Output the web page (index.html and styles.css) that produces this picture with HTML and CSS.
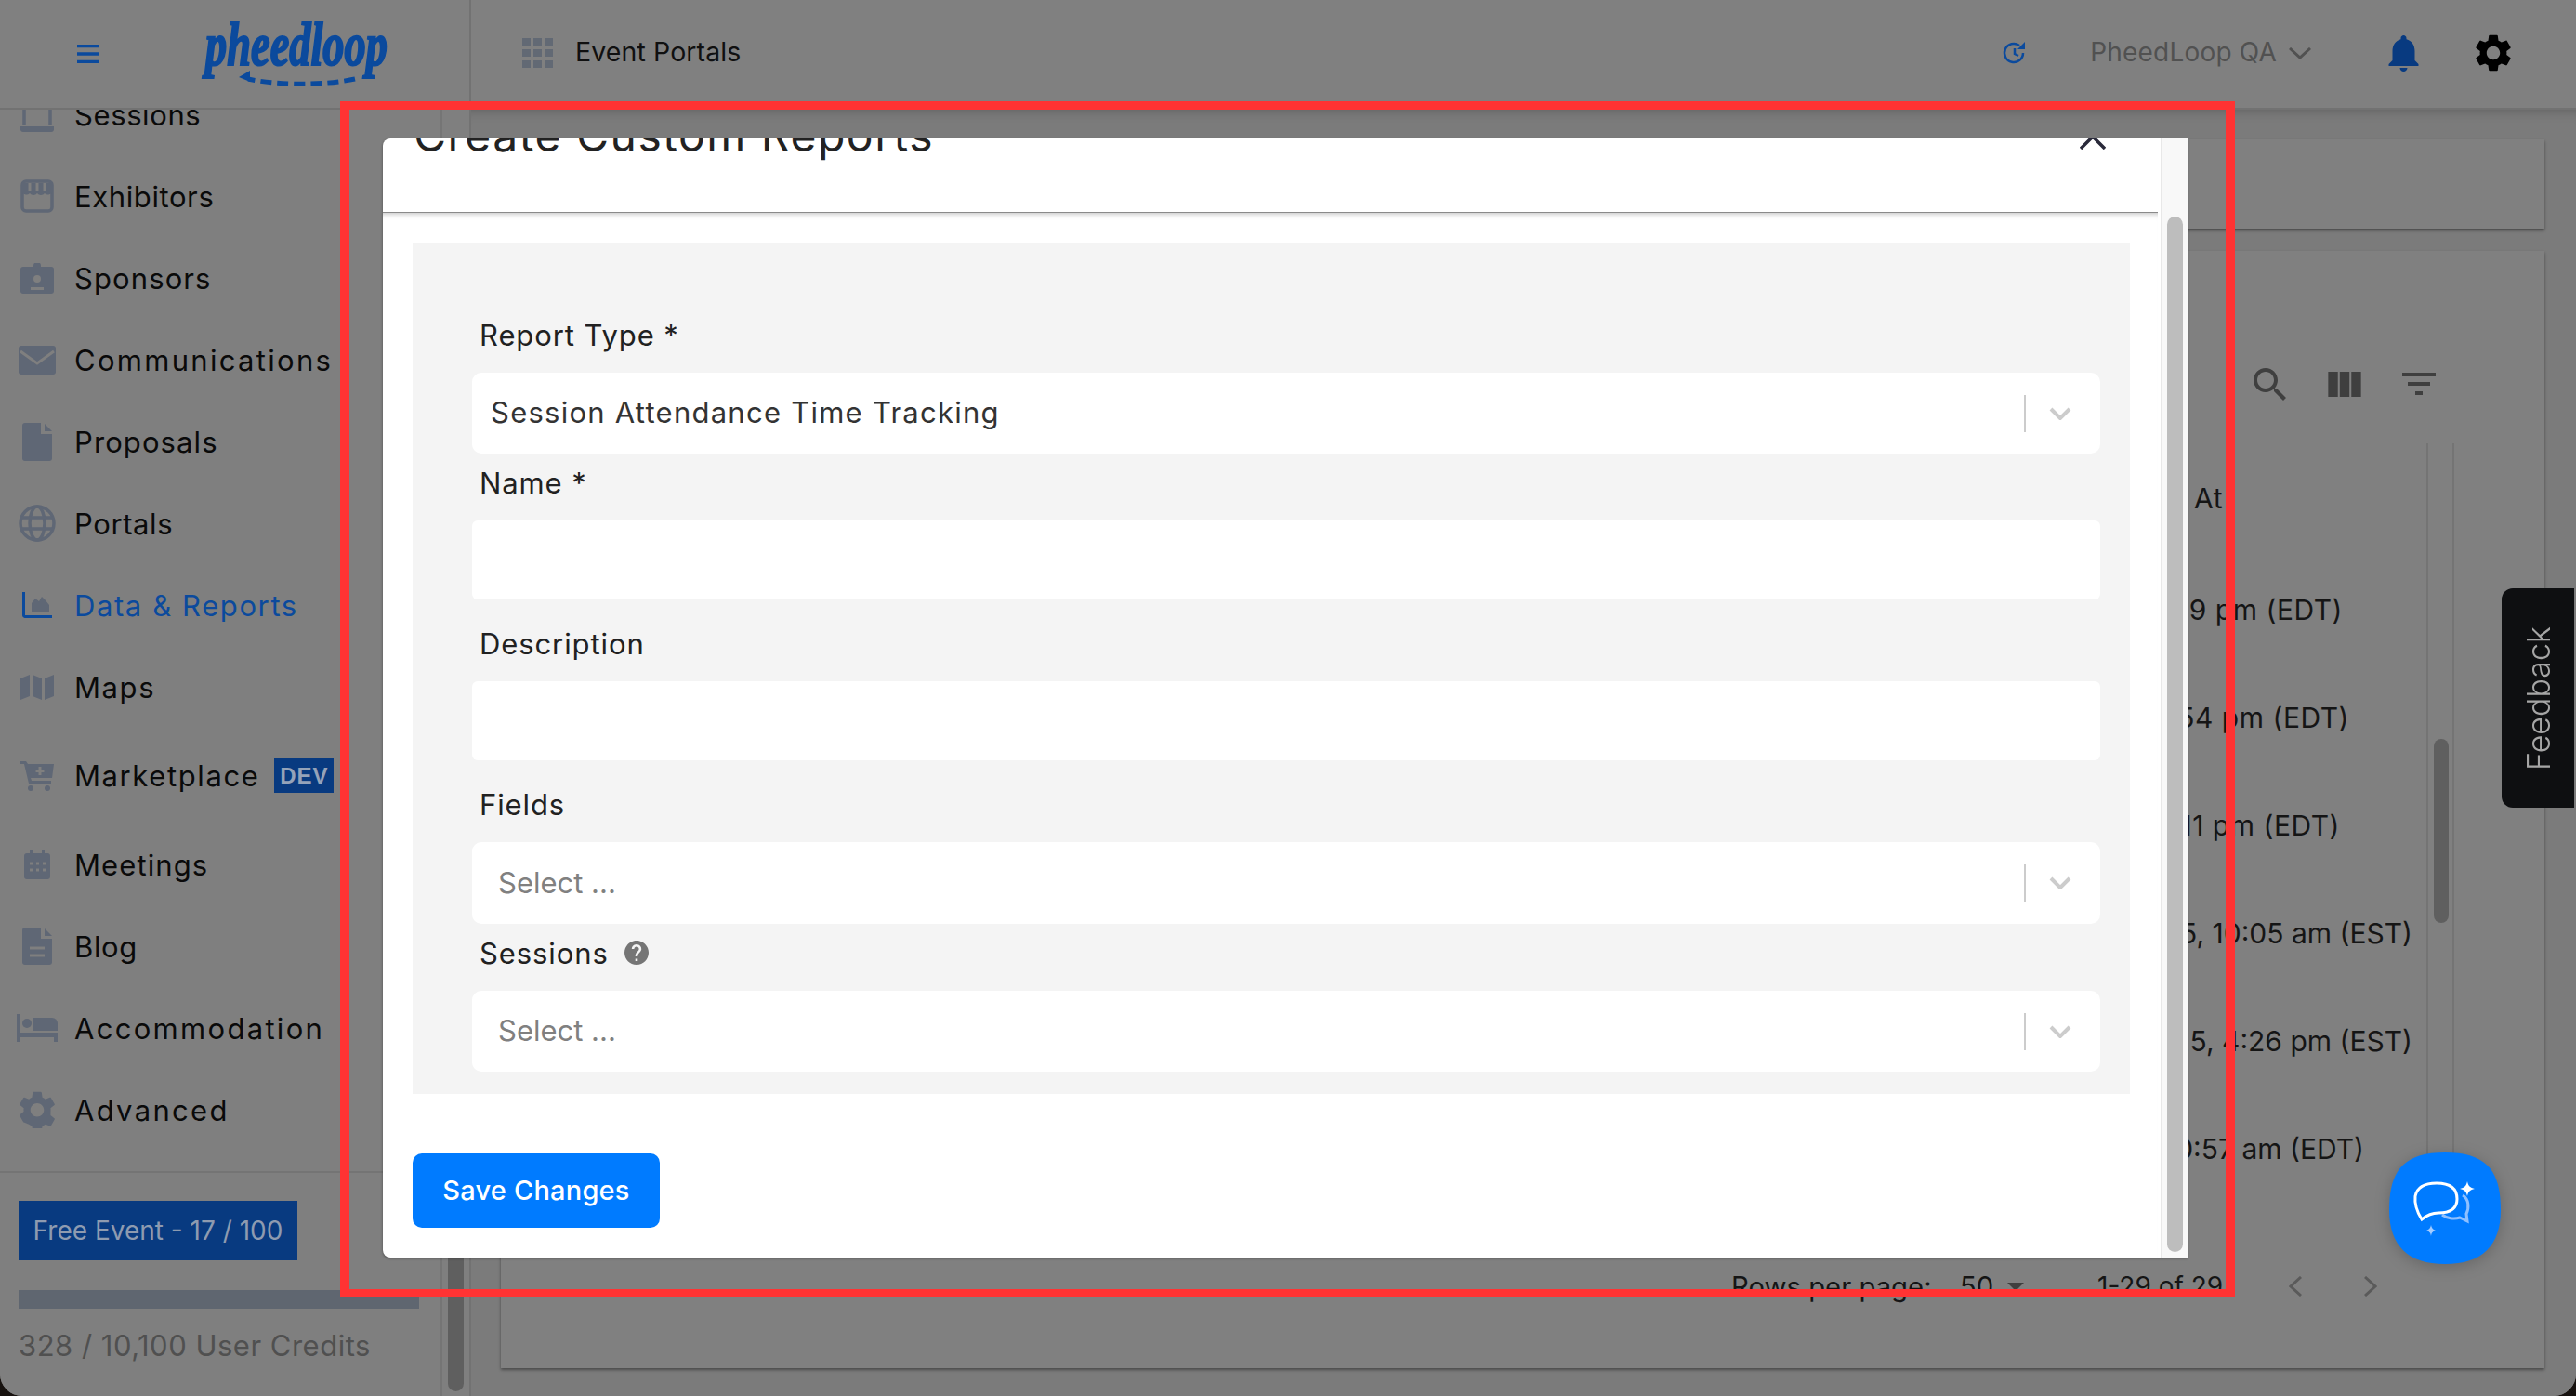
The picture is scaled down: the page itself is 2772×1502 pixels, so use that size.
FILE: index.html
```html
<!DOCTYPE html>
<html lang="en">
<head>
<meta charset="utf-8">
<title>Create Custom Reports</title>
<link rel="stylesheet" href="styles.css">
</head>
<body>
<div class="app">
  <header class="topbar">
    <div class="brand">
      <svg class="burger" viewBox="0 0 24 20"><path d="M0 1.500h24M0 10h24M0 18.500h24"/></svg>
      <svg class="logo" viewBox="0 0 200 70">
        <text x="2" y="46" textLength="196" lengthAdjust="spacingAndGlyphs">pheedloop</text>
        <path class="logo-dash" d="M163 61C130 68 80 68 48 61"/>
        <path class="logo-head" d="M38 59l12-7v12z"/>
      </svg>
    </div>
    <div class="crumb">
      <svg class="apps" viewBox="0 0 33 32"><path d="M0 0h9v8H0zM12 0h9v8h-9zM24 0h9v8h-9zM0 12h9v8H0zM12 12h9v8h-9zM24 12h9v8h-9zM0 24h9v8H0zM12 24h9v8h-9zM24 24h9v8h-9z"/></svg>
      <span class="crumb-text">Event Portals</span>
    </div>
    <div class="top-actions">
      <svg class="refresh" viewBox="0 0 25 24"><path d="M21 12a10 10 0 1 1-4-8" /><path d="M12 7v6l4 2" /><path class="refresh-head" d="M23 0v8h-8z"/></svg>
      <span class="org">PheedLoop QA</span>
      <svg class="org-chev" viewBox="0 0 24 12"><path d="M1 1l11 10L23 1"/></svg>
      <svg class="bell" viewBox="4 2.500 16 19.500"><path d="M12 22c1.100 0 2-.9 2-2h-4c0 1.100.89 2 2 2zm6-6v-5c0-3.070-1.640-5.640-4.500-6.320V4c0-.83-.67-1.500-1.500-1.500s-1.500.67-1.500 1.500v.68C7.630 5.360 6 7.920 6 11v5l-2 2v1h16v-1l-2-2z"/></svg>
      <svg class="gear-top" viewBox="2.600 2 18.800 20"><path d="M19.140 12.940c.04-.3.06-.61.06-.94 0-.32-.02-.64-.07-.94l2.030-1.580c.18-.14.23-.41.12-.61l-1.920-3.320c-.12-.22-.37-.29-.59-.22l-2.390.96c-.5-.38-1.030-.7-1.620-.94l-.36-2.540c-.04-.24-.24-.41-.48-.41h-3.840c-.24 0-.43.17-.47.41l-.36 2.540c-.59.24-1.130.57-1.620.94l-2.390-.96c-.22-.08-.47 0-.59.22L2.740 8.870c-.12.21-.08.47.12.61l2.030 1.580c-.05.3-.09.63-.09.94s.02.64.07.94l-2.030 1.580c-.18.14-.23.41-.12.61l1.920 3.320c.12.22.37.29.59.22l2.390-.96c.5.38 1.030.7 1.620.94l.36 2.540c.05.24.24.41.48.41h3.840c.24 0 .44-.17.47-.41l.36-2.540c.59-.24 1.130-.56 1.620-.94l2.390.96c.22.08.47 0 .59-.22l1.920-3.320c.12-.22.07-.47-.12-.61l-2.010-1.580zM12 15.600c-1.980 0-3.600-1.620-3.600-3.600s1.620-3.600 3.600-3.600 3.600 1.620 3.600 3.600-1.620 3.600-3.600 3.600z"/></svg>
    </div>
  </header>

  <div class="workspace">
    <aside class="sidebar">
      <div class="side-main">
        <nav class="nav">
          <a class="nav-row"><span class="nav-icon"><svg class="ic-w36" viewBox="0 0 36 40"><path class="ic-line" d="M4 2v30M32 2v30"/><path d="M0 33h36v3a3 3 0 0 1-3 3H3a3 3 0 0 1-3-3z"/></svg></span>Sessions</a>
          <a class="nav-row"><span class="nav-icon"><svg class="ic-w36" viewBox="0 0 36 36"><rect class="ic-line" x="2" y="2" width="32" height="32" rx="4"/><path d="M2 14a5 5 0 0 0 8 1 5 5 0 0 0 8 0 5 5 0 0 0 8 0 5 5 0 0 0 8-1V4H2z"/><path class="ic-cut" d="M10 4v9M18 4v9M26 4v9"/></svg></span>Exhibitors</a>
          <a class="nav-row track-s"><span class="nav-icon"><svg class="ic-w36" viewBox="0 0 36 33"><path d="M3 4h11V3a4 4 0 0 1 8 0v1h11a3 3 0 0 1 3 3v23a3 3 0 0 1-3 3H3a3 3 0 0 1-3-3V7a3 3 0 0 1 3-3z"/><circle class="ic-knock" cx="18" cy="17" r="4"/><path class="ic-knock" d="M11 26h14v3H11z"/></svg></span>Sponsors</a>
          <a class="nav-row track-l"><span class="nav-icon"><svg class="ic-w40" viewBox="0 0 40 31"><rect width="40" height="31" rx="3"/><path class="ic-cut" d="M2 6l18 13L38 6"/></svg></span>Communications</a>
          <a class="nav-row track-s"><span class="nav-icon"><svg class="ic-w32" viewBox="0 0 32 41"><path d="M3 0h17v12h12v26a3 3 0 0 1-3 3H3a3 3 0 0 1-3-3V3a3 3 0 0 1 3-3zM24 1l8 8h-8z"/></svg></span>Proposals</a>
          <a class="nav-row"><span class="nav-icon"><svg class="ic-w40" viewBox="0 0 40 40"><g class="ic-line"><circle cx="20" cy="20" r="18"/><ellipse cx="20" cy="20" rx="8" ry="18"/><path d="M3 14h34M3 26h34"/></g></svg></span>Portals</a>
          <a class="nav-row nav-active track-m"><span class="nav-icon"><svg class="ic-w32" viewBox="0 0 32 28"><path class="ic-axis" d="M1.500 0v25a1.500 1.500 0 0 0 1.500 1.500h29"/><path d="M10 21v-9l4-5 4 3 3-5 4 4 4 5v7z"/></svg></span>Data &amp; Reports</a>
          <a class="nav-row track-m"><span class="nav-icon"><svg class="ic-w36" viewBox="0 0 36 28"><path d="M0 5l10-4v23L0 28zM13 1l10 4v23l-10-4zM26 5l10-4v23l-10 4z"/></svg></span>Maps</a>
          <a class="nav-row nav-row-tall track-m"><span class="nav-icon"><svg class="ic-w36" viewBox="0 0 36 32"><path d="M0 0h6l2 3h28l-2 15H11l1 3h21v3H9L4 3H0z"/><circle cx="11" cy="29" r="3"/><circle cx="29" cy="29" r="3"/><path class="ic-cut" d="M21 6v9M16.500 10.500h9"/></svg></span>Marketplace<span class="dev">DEV</span></a>
          <a class="nav-row track-s"><span class="nav-icon"><svg class="ic-w28" viewBox="0 0 28 31"><path d="M6 0h3v3h10V0h3v3h3a3 3 0 0 1 3 3v22a3 3 0 0 1-3 3H3a3 3 0 0 1-3-3V6a3 3 0 0 1 3-3h3z"/><path class="ic-dots" d="M6 14h3M13 14h3M20 14h3M6 21h3M13 21h3M20 21h3"/></svg></span>Meetings</a>
          <a class="nav-row"><span class="nav-icon"><svg class="ic-w32" viewBox="0 0 32 40"><path d="M3 0h17v12h12v25a3 3 0 0 1-3 3H3a3 3 0 0 1-3-3V3a3 3 0 0 1 3-3zM24 1l8 8h-8z"/><path class="ic-cut" d="M8 22h16M8 30h16"/></svg></span>Blog</a>
          <a class="nav-row track-l"><span class="nav-icon"><svg class="ic-w44" viewBox="0 0 44 30"><path d="M0 0h4v20h40v10h-4v-5H4v5H0z"/><circle cx="11" cy="10" r="5"/><path d="M18 4h20a6 6 0 0 1 6 6v8H18z"/></svg></span>Accommodation</a>
          <a class="nav-row track-l"><span class="nav-icon"><svg class="ic-w38" viewBox="2.600 2 18.800 20"><path d="M19.140 12.940c.04-.3.06-.61.06-.94 0-.32-.02-.64-.07-.94l2.030-1.580c.18-.14.23-.41.12-.61l-1.920-3.320c-.12-.22-.37-.29-.59-.22l-2.390.96c-.5-.38-1.030-.7-1.620-.94l-.36-2.540c-.04-.24-.24-.41-.48-.41h-3.840c-.24 0-.43.17-.47.41l-.36 2.540c-.59.24-1.130.57-1.620.94l-2.390-.96c-.22-.08-.47 0-.59.22L2.740 8.870c-.12.21-.08.47.12.61l2.030 1.580c-.05.3-.09.63-.09.94s.02.64.07.94l-2.030 1.580c-.18.14-.23.41-.12.61l1.920 3.320c.12.22.37.29.59.22l2.390.96c.5.38 1.030.7 1.620.94l.36 2.540c.05.24.24.41.48.41h3.840c.24 0 .44-.17.47-.41l.36-2.540c.59-.24 1.130-.56 1.620-.94l2.390.96c.22.08.47 0 .59-.22l1.920-3.320c.12-.22.07-.47-.12-.61l-2.010-1.580zM12 15.600c-1.980 0-3.600-1.620-3.600-3.600s1.620-3.600 3.600-3.600 3.600 1.620 3.600 3.600-1.620 3.600-3.600 3.600z"/></svg></span>Advanced</a>
        </nav>
        <div class="plan">
          <div class="plan-badge">Free Event - 17 / 100</div>
          <div class="plan-bar"></div>
          <div class="plan-credits">328 / 10,100 User Credits</div>
        </div>
      </div>
      <div class="side-scroll"><div class="side-thumb"></div></div>
    </aside>

    <main class="main">
      <section class="card card-top"></section>
      <section class="card card-table">
        <div class="toolbar">
          <svg class="tool-search" viewBox="3 3 17.500 17.500"><path d="M15.500 14h-.79l-.28-.27C15.410 12.590 16 11.110 16 9.500 16 5.910 13.090 3 9.500 3S3 5.910 3 9.500 5.910 16 9.500 16c1.610 0 3.090-.59 4.230-1.570l.27.28v.79l5 4.990L20.490 19l-4.990-5zm-6 0C7.010 14 5 11.990 5 9.500S7.010 5 9.500 5 14 7.010 14 9.500 11.990 14 9.500 14z"/></svg>
          <svg class="tool-cols" viewBox="4 5 17 13"><path d="M10 18h5V5h-5v13zm-6 0h5V5H4v13zM16 5v13h5V5h-5z"/></svg>
          <svg class="tool-filter" viewBox="3 6 18 12"><path d="M10 18h4v-2h-4v2zM3 6v2h18V6H3zm3 7h12v-2H6v2z"/></svg>
        </div>
        <div class="table-wrap">
          <div class="table-rows">
            <div class="t-head"><span>Created At</span></div>
            <div class="t-row"><span>Jul 25, 2:39 pm (EDT)</span></div>
            <div class="t-row"><span>Jul 23, 3:54 pm (EDT)</span></div>
            <div class="t-row"><span>Jul 22, 2:11 pm (EDT)</span></div>
            <div class="t-row"><span>Mar 12, 2025, 10:05 am (EST)</span></div>
            <div class="t-row"><span>Feb 13, 2025, 4:26 pm (EST)</span></div>
            <div class="t-row"><span>Jun 4, 10:57 am (EDT)</span></div>
          </div>
          <div class="t-scroll"><div class="t-thumb"></div></div>
        </div>
        <div class="pager">
          <span class="pager-label">Rows per page:</span>
          <span class="pager-size">50</span>
          <svg class="pager-caret" viewBox="0 0 18 9"><path d="M0 0h18L9 9z"/></svg>
          <span class="pager-range">1-29 of 29</span>
          <svg class="pager-chev pager-prev" viewBox="0 0 14 22"><path d="M13 1L2 11l11 10"/></svg>
          <svg class="pager-chev pager-next" viewBox="0 0 14 22"><path d="M1 1l11 10L1 21"/></svg>
        </div>
      </section>
    </main>
  </div>

  <button class="feedback"><span>Feedback</span></button>

  <div class="fab">
    <svg viewBox="0 0 120 120">
      <path class="fab-bg" d="M60 0C105 0 120 20 120 62C120 100 100 120 60 120C20 120 0 100 0 62C0 20 15 0 60 0Z"/>
      <path class="fab-main" d="M35 72C30 64 27 56 28 47C30 37 39 33 51 33C66 33 73 39 73 50C73 61 65 65 53 65C46 65 41 67 35 72Z"/>
      <path class="fab-soft" d="M79 46C86 50 86 60 83 66L84 74L76 70C70 72 62 71 57 67"/>
      <path class="fab-star" d="M84 31C85 36 87 38 92 39C87 40 85 42 84 47C83 42 81 40 76 39C81 38 83 36 84 31Z"/>
      <path class="fab-star-soft" d="M45 78C45.500 81 47 83 50 84C47 85 45.500 86 45 90C44.500 86 43 85 40 84C43 83 44.500 81 45 78Z"/>
    </svg>
  </div>

  <div class="modal">
    <div class="modal-main">
      <div class="modal-head">
        <h2 class="modal-title">Create Custom Reports</h2>
        <svg class="modal-close" viewBox="0 0 28 28"><path d="M1 1l26 26M27 1L1 27"/></svg>
      </div>
      <div class="modal-body">
        <form class="panel">
          <label class="f-label">Report Type *</label>
          <div class="select select-gap"><span class="select-value">Session Attendance Time Tracking</span><i class="select-sep"></i><svg class="select-chev" viewBox="0 0 24 14"><path d="M2 2l10 10L22 2"/></svg></div>
          <label class="f-label">Name *</label>
          <input class="text-input" type="text">
          <label class="f-label">Description</label>
          <input class="text-input" type="text">
          <label class="f-label">Fields</label>
          <div class="select select-gap select-tall"><span class="select-value select-ph">Select ...</span><i class="select-sep"></i><svg class="select-chev" viewBox="0 0 24 14"><path d="M2 2l10 10L22 2"/></svg></div>
          <label class="f-label f-label-help">Sessions <svg class="help" viewBox="2 2 20 20"><path d="M12 2C6.480 2 2 6.480 2 12s4.480 10 10 10 10-4.480 10-10S17.520 2 12 2zm1 17h-2v-2h2v2zm2.070-7.750l-.9.920C13.450 12.900 13 13.500 13 15h-2v-.5c0-1.100.45-2.100 1.170-2.830l1.240-1.260c.37-.36.59-.86.59-1.410 0-1.100-.9-2-2-2s-2 .9-2 2H8c0-2.210 1.790-4 4-4s4 1.790 4 4c0 .88-.36 1.680-.93 2.250z"/></svg></label>
          <div class="select"><span class="select-value select-ph">Select ...</span><i class="select-sep"></i><svg class="select-chev" viewBox="0 0 24 14"><path d="M2 2l10 10L22 2"/></svg></div>
        </form>
        <button class="save" type="button">Save Changes</button>
      </div>
    </div>
    <div class="modal-scroll"><div class="modal-thumb"></div></div>
  </div>

  <div class="highlight"></div>
</div>
</body>
</html>
```

FILE: styles.css
```css
* { box-sizing: border-box; }
html, body { margin: 0; height: 100%; overflow: hidden; background: #17120f; }
body { font-family: Inter, "Open Sans", sans-serif; color: #0a0a0a; }
svg { display: block; flex: none; }

.app { position: relative; width: 2772px; height: 1502px; display: flex; flex-direction: column; background: #808080; border-radius: 0 0 24px 24px; overflow: hidden; }

/* top bar */
.topbar { height: 118px; flex: none; display: flex; align-items: center; border-bottom: 2px solid #727272; background: #808080; }
.brand { width: 507px; height: 116px; flex: none; display: flex; align-items: center; border-right: 2px solid #727272; }
.burger { width: 24px; height: 20px; margin-left: 83px; fill: none; stroke: #0b4a9d; stroke-width: 3.500; }
.logo { width: 200px; height: 70px; margin-left: 112px; margin-top: 2px; overflow: visible; }
.logo text { font-family: "Liberation Serif", serif; font-style: italic; font-weight: 700; font-size: 66px; fill: #0b4a9d; stroke: #0b4a9d; stroke-width: 2.200; }
.logo-dash { fill: none; stroke: #0b4a9d; stroke-width: 5; stroke-dasharray: 12 6; }
.logo-head { fill: #0b4a9d; }
.crumb { display: flex; align-items: center; margin-left: 55px; padding-bottom: 2px; font-size: 28.500px; letter-spacing: .1px; color: #101010; }
.crumb-text { padding-bottom: 3px; margin-left: -1px; }
.apps { width: 33px; height: 32px; margin-right: 25px; fill: #626974; }
.top-actions { margin-left: auto; display: flex; align-items: center; padding: 0 70px 2px 0; }
.refresh { width: 25px; height: 24px; fill: none; stroke: #0b4a9d; stroke-width: 2.500; overflow: visible; }
.refresh-head { fill: #0b4a9d; stroke: none; }
.org { margin-left: 68px; padding-bottom: 3px; font-size: 28px; color: #515151; letter-spacing: .2px; }
.org-chev { width: 24px; height: 12px; margin-left: 13px; fill: none; stroke: #515151; stroke-width: 3; }
.bell { width: 33px; height: 39px; margin-left: 83px; fill: #083a80; }
.gear-top { width: 38px; height: 40px; margin-left: 61px; fill: #000; }

/* workspace */
.workspace { flex: 1; min-height: 0; display: flex; }
.sidebar { width: 507px; flex: none; display: flex; border-right: 2px solid #727272; background: #7f7f7f; }
.side-main { width: 476px; flex: none; display: flex; flex-direction: column; border-right: 2px solid #757575; }
.nav { flex: 1; min-height: 0; overflow: hidden; }
.nav-row { height: 88px; display: flex; align-items: center; font-size: 31px; letter-spacing: .6px; color: #0a0a0a; white-space: nowrap; }
.nav-row:first-child { margin-top: -39px; }
.nav-row-tall { height: 103px; }
.track-s { letter-spacing: 1.100px; }
.track-m { letter-spacing: 1.600px; }
.track-l { letter-spacing: 2.300px; }
.nav-active { color: #0b4a9d; }
.nav-active svg { fill: #0b4a9d; }
.nav-icon { width: 80px; flex: none; display: flex; justify-content: center; }
.nav-icon svg { fill: #5f6775; }
.ic-w28 { width: 28px; }
.ic-w32 { width: 32px; }
.ic-w36 { width: 36px; }
.ic-w38 { width: 38px; }
.ic-w40 { width: 40px; }
.ic-w44 { width: 44px; }
.nav-icon .ic-line { fill: none; stroke: #5f6775; stroke-width: 3.500; }
.nav-icon .ic-cut { fill: none; stroke: #7f7f7f; stroke-width: 3; }
.nav-icon .ic-knock { fill: #7f7f7f; }
.nav-icon .ic-axis { fill: none; stroke: #0b4a9d; stroke-width: 3; }
.nav-icon .ic-dots { fill: none; stroke: #7f7f7f; stroke-width: 3; }
.dev { margin-left: 16px; width: 64px; height: 37px; display: flex; align-items: center; justify-content: center; background: #083a80; color: #95a3b9; font-family: "Liberation Sans", sans-serif; font-weight: 700; font-size: 24px; letter-spacing: 1px; }
.plan { height: 242px; flex: none; border-top: 2px solid #747474; padding: 30px 0 0 20px; }
.plan-badge { width: 300px; height: 64px; display: flex; align-items: center; justify-content: center; background: #083a80; color: #8e9bb0; font-size: 28px; }
.plan-bar { width: 431px; height: 20px; margin-top: 32px; background: #5f6670; }
.plan-credits { margin-top: 22px; font-size: 31px; line-height: 36px; letter-spacing: .5px; color: #505050; white-space: nowrap; }
.side-scroll { flex: 1; position: relative; }
.side-thumb { width: 17px; height: 240px; margin: 1139px 0 0 6px; border-radius: 9px; background: #5f5f5f; }

/* main */
.main { flex: 1; min-width: 0; padding: 32px 34px 30px 32px; display: flex; flex-direction: column; gap: 24px; background: #7b7b7b; box-shadow: inset 0 14px 14px -14px rgba(0,0,0,.25); }
.card { background: #808080; box-shadow: 0 2px 3px rgba(0,0,0,.4); }
.card-top { height: 96px; flex: none; }
.card-table { flex: 1; display: flex; flex-direction: column; min-height: 0; }
.toolbar { height: 207px; flex: none; display: flex; align-items: center; padding: 79px 0 0 1886px; fill: #3f3f3f; }
.tool-search { width: 35px; height: 35px; }
.tool-cols { width: 36px; height: 27px; margin-left: 45px; }
.tool-filter { width: 36px; height: 24px; margin-left: 44px; }
.table-wrap { height: 863px; flex: none; display: flex; }
.table-rows { flex: 1; min-width: 0; font-size: 30px; letter-spacing: .5px; color: #151515; white-space: nowrap; }
.t-head { height: 122px; display: flex; justify-content: flex-end; align-items: center; padding: 0 219px 5px 0; word-spacing: -5px; }
.t-row { height: 116px; display: flex; justify-content: flex-end; align-items: center; padding-bottom: 2px; }
.t-row:nth-child(2) { padding-right: 90px; }
.t-row:nth-child(3) { padding-right: 83px; }
.t-row:nth-child(4) { padding-right: 93px; }
.t-row:nth-child(5) { padding-right: 15px; letter-spacing: 0; }
.t-row:nth-child(6) { padding-right: 15px; letter-spacing: 0; }
.t-row:nth-child(7) { padding-right: 67px; letter-spacing: 0; }
.t-scroll { width: 30px; flex: none; margin-right: 97px; border-left: 2px solid #747474; border-right: 2px solid #747474; }
.t-thumb { width: 16px; height: 198px; margin: 318px 0 0 6px; border-radius: 8px; background: #5f5f5f; }
.pager { height: 88px; flex: none; display: flex; align-items: center; padding-left: 1324px; font-size: 29.300px; color: #151515; white-space: nowrap; }
.pager-label { width: 246px; flex: none; }
.pager-size { width: 51px; flex: none; }
.pager-caret { width: 18px; height: 9px; fill: #3f3f3f; }
.pager-range { margin-left: 79px; width: 206px; flex: none; font-size: 28px; }
.pager-chev { width: 14px; height: 22px; fill: none; stroke: #5a5a5a; stroke-width: 3; }
.pager-next { margin-left: 67px; }

/* floating */
.feedback { position: absolute; top: 633px; right: 2px; width: 78px; height: 236px; padding: 0; border: 0; border-radius: 12px 0 0 12px; background: #0e0f11; color: #a5a5a5; font: 300 34px Inter, sans-serif; display: flex; align-items: center; justify-content: center; }
.feedback span { writing-mode: vertical-rl; transform: rotate(180deg); }
.fab { position: absolute; left: 2571px; top: 1240px; width: 120px; height: 120px; filter: drop-shadow(0 3px 8px rgba(0,0,0,.2)); }
.fab-bg { fill: #007bff; }
.fab-main { fill: none; stroke: #fff; stroke-width: 3; }
.fab-soft { fill: none; stroke: #8fc0ff; stroke-width: 3; }
.fab-star { fill: #fff; }
.fab-star-soft { fill: #a5ccff; }

/* modal */
.modal { position: absolute; left: 412px; top: 149px; width: 1942px; height: 1204px; display: flex; background: #fff; border-radius: 8px 0 0 8px; overflow: hidden; box-shadow: 0 1px 3px rgba(0,0,0,.4); }
.modal-main { flex: 1; min-width: 0; padding-right: 3px; }
.modal-head { height: 80px; display: flex; justify-content: space-between; align-items: flex-start; padding: 0 56px 0 33px; overflow: hidden; border-bottom: 1px solid #8a8a8a; position: relative; }
.modal-body { height: 1124px; padding: 32px 0 0 32px; box-shadow: inset 0 7px 7px -7px rgba(0,0,0,.35); }
.modal-title { margin: -33px 0 0; font-size: 48px; line-height: 60px; letter-spacing: 1.500px; font-weight: 400; color: #222; white-space: nowrap; }
.modal-close { width: 28px; height: 28px; margin-top: -16px; fill: none; stroke: #2a2a3a; stroke-width: 3.500; }
.modal-scroll { width: 29px; flex: none; background: #f8f8f8; border-left: 2px solid #e8e8e8; padding: 84px 0 6px 5px; }
.modal-thumb { width: 17px; height: 100%; border-radius: 9px; background: #bdbdbd; }
.panel { width: 1848px; height: 916px; padding: 80px 32px 0 64px; background: #f4f4f4; }
.f-label { display: flex; align-items: center; height: 40px; margin: 0 0 20px 8px; padding-bottom: 2px; font-size: 31px; letter-spacing: .9px; color: #212121; }
.f-label-help { gap: 17px; }
.help { width: 26px; height: 26px; fill: #757575; }
.select { height: 87px; display: flex; align-items: center; background: #fff; border-radius: 10px; padding-left: 20px; }
.select-gap { margin-bottom: 12px; }
.select-tall { height: 88px; }
.select-value { flex: 1; padding-bottom: 2px; font-size: 31px; letter-spacing: 1.250px; color: #333; }
.select-ph { padding-left: 8px; letter-spacing: 0; color: #808080; }
.select-sep { width: 2px; height: 40px; background: #ccc; }
.select-chev { width: 24px; height: 14px; margin: 0 31px 0 25px; fill: none; stroke: #ccc; stroke-width: 4; }
.text-input { display: block; width: 100%; height: 85px; margin: 0 0 28px; padding: 0 20px; border: 0; border-radius: 6px; background: #fff; font: 31px Inter, sans-serif; }
.save { display: block; width: 266px; height: 80px; margin-top: 64px; padding: 0 0 2px; border: 0; border-radius: 10px; background: #007bff; color: #fff; font: 500 29px Inter, sans-serif; letter-spacing: .2px; }

.highlight { position: absolute; left: 366px; top: 109px; width: 2039px; height: 1287px; border: solid #ff3333; border-width: 9px 10px 9px 10px; pointer-events: none; }
```
